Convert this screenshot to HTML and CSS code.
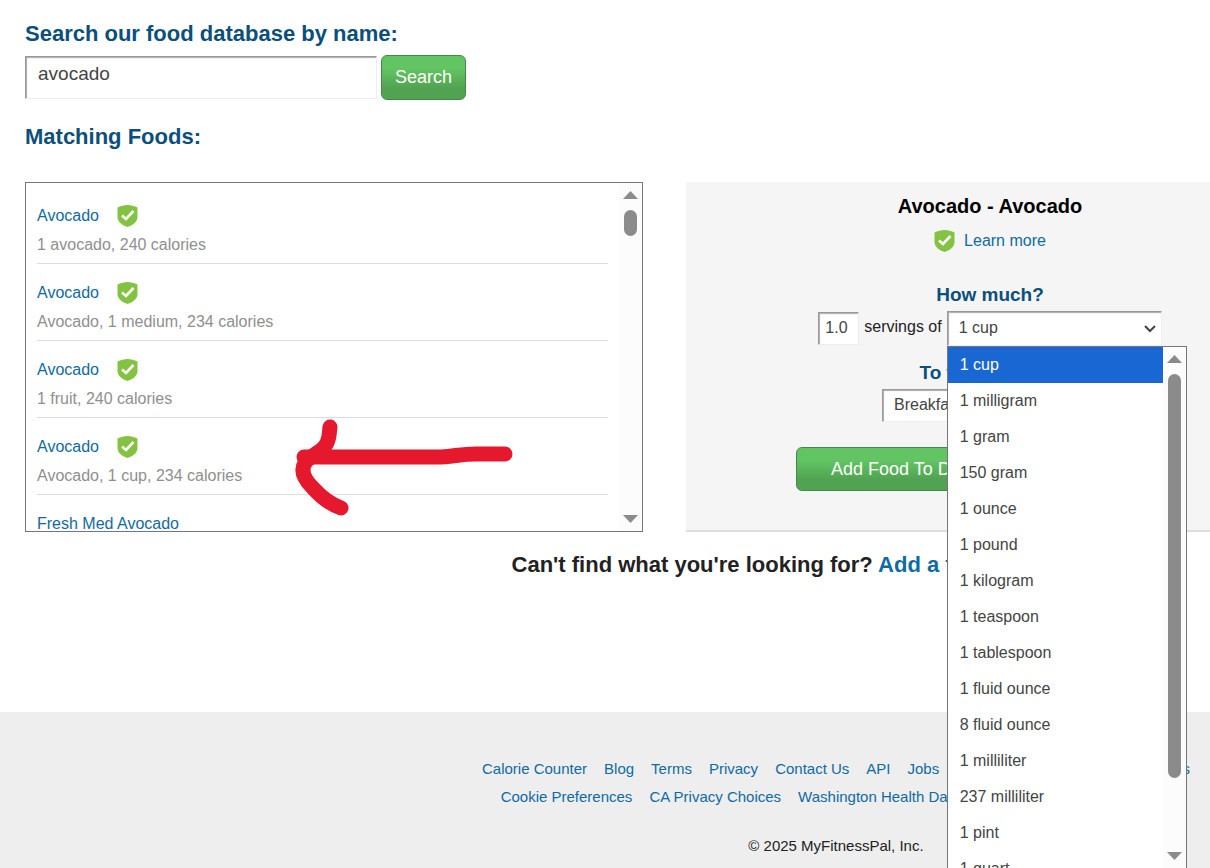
FILE: index.html
```html
<!DOCTYPE html>
<html lang="en">
<head>
    <meta charset="UTF-8">
    <meta name="viewport" content="width=device-width, initial-scale=1.0">
    <title>Add Food</title>
    <link rel="stylesheet" href="styles.css">
</head>
<body>
    <svg class="sprite" aria-hidden="true">
        <symbol id="verified" viewBox="0 0 20 22">
            <path fill="#84c341" d="M10 0C13 0 17 1 20 2.500V12C20 17 15 20.500 10 22C5 20.500 0 17 0 12V2.500C3 1 7 0 10 0Z"/>
            <path fill="none" stroke="#fff" stroke-width="2.600" d="M4.500 10.500L8.500 14L16 6"/>
        </symbol>
        <symbol id="chevron" viewBox="0 0 12 8">
            <path fill="none" stroke="#444" stroke-width="2" d="M1 1L6 6L11 1"/>
        </symbol>
        <symbol id="up" viewBox="0 0 15 8">
            <path fill="#8b8b8b" d="M7.500 0L15 8H0Z"/>
        </symbol>
        <symbol id="down" viewBox="0 0 15 8">
            <path fill="#8b8b8b" d="M0 0H15L7.500 8Z"/>
        </symbol>
    </svg>

    <main class="content">
        <form class="search">
            <label class="heading" for="search">Search our food database by name:</label>
            <div class="search-row">
                <input class="field search-input" type="text" id="search" name="search" value="avocado">
                <button class="button search-button" type="submit">Search</button>
            </div>
        </form>

        <h2 class="heading matching-title">Matching Foods:</h2>

        <div class="columns">
            <div class="matching">
                <ul class="foods">
                    <li class="food">
                        <div class="food-name"><a href="#">Avocado</a><svg class="badge"><use href="#verified"/></svg></div>
                        <div class="food-info">1 avocado, 240 calories</div>
                    </li>
                    <li class="food">
                        <div class="food-name"><a href="#">Avocado</a><svg class="badge"><use href="#verified"/></svg></div>
                        <div class="food-info">Avocado, 1 medium, 234 calories</div>
                    </li>
                    <li class="food">
                        <div class="food-name"><a href="#">Avocado</a><svg class="badge"><use href="#verified"/></svg></div>
                        <div class="food-info">1 fruit, 240 calories</div>
                    </li>
                    <li class="food">
                        <div class="food-name"><a href="#">Avocado</a><svg class="badge"><use href="#verified"/></svg></div>
                        <div class="food-info">Avocado, 1 cup, 234 calories</div>
                    </li>
                    <li class="food">
                        <div class="food-name"><a href="#">Fresh Med Avocado</a></div>
                    </li>
                </ul>
                <div class="scrollbar">
                    <svg class="scroll-arrow"><use href="#up"/></svg>
                    <div class="thumb thumb-short"></div>
                    <svg class="scroll-arrow scroll-down"><use href="#down"/></svg>
                </div>
                <!-- hand drawn arrow over the list -->
                <svg class="pointer" viewBox="0 0 220 98" aria-hidden="true">
                    <path d="M34 9C33 15 34 22 29 28C24 35 13 38 9 45C4 53 9 62 17 70C25 79 34 86 45 90"/>
                    <path d="M8 39H145C160 38 165 36 180 36H209"/>
                </svg>
            </div>

            <form class="details">
                <h3 class="food-title">Avocado - Avocado</h3>
                <p class="learn"><svg class="badge"><use href="#verified"/></svg><a href="#">Learn more</a></p>

                <h4 class="question">How much?</h4>
                <div class="amount">
                    <input class="field quantity" type="text" id="quantity" name="quantity" value="1.0" aria-label="Quantity">
                    <label for="unit">servings of</label>
                    <div class="unit">
                        <select class="field unit-select" id="unit" name="unit">
                            <option>1 cup</option>
                        </select>
                        <svg class="chevron"><use href="#chevron"/></svg>
                        <div class="popup">
                            <ul class="options" role="listbox" aria-label="Serving size">
                                <li class="option selected" role="option" aria-selected="true">1 cup</li>
                                <li class="option" role="option">1 milligram</li>
                                <li class="option" role="option">1 gram</li>
                                <li class="option" role="option">150 gram</li>
                                <li class="option" role="option">1 ounce</li>
                                <li class="option" role="option">1 pound</li>
                                <li class="option" role="option">1 kilogram</li>
                                <li class="option" role="option">1 teaspoon</li>
                                <li class="option" role="option">1 tablespoon</li>
                                <li class="option" role="option">1 fluid ounce</li>
                                <li class="option" role="option">8 fluid ounce</li>
                                <li class="option" role="option">1 milliliter</li>
                                <li class="option" role="option">237 milliliter</li>
                                <li class="option" role="option">1 pint</li>
                                <li class="option" role="option">1 quart</li>
                            </ul>
                            <div class="scrollbar">
                                <svg class="scroll-arrow"><use href="#up"/></svg>
                                <div class="thumb thumb-long"></div>
                                <svg class="scroll-arrow scroll-down"><use href="#down"/></svg>
                            </div>
                        </div>
                    </div>
                </div>

                <label class="question meal-label" for="meal">To which meal?</label>
                <select class="field meal" id="meal" name="meal">
                    <option>Breakfast</option>
                    <option>Lunch</option>
                    <option>Dinner</option>
                    <option>Snacks</option>
                </select>
                <div class="actions">
                    <button class="button add-button" type="submit">Add Food To Diary</button>
                </div>
            </form>
        </div>
    </main>

    <p class="missing">Can't find what you're looking for? <a href="#">Add a food to the database</a></p>

    <footer class="footer">
        <nav class="links">
            <a href="#">Calorie Counter</a>
            <a href="#">Blog</a>
            <a href="#">Terms</a>
            <a href="#">Privacy</a>
            <a href="#">Contact Us</a>
            <a href="#">API</a>
            <a href="#">Jobs</a>
            <a href="#">Feedback</a>
            <a href="#">Community Guidelines</a>
        </nav>
        <nav class="links">
            <a href="#">Cookie Preferences</a>
            <a href="#">CA Privacy Choices</a>
            <a href="#">Washington Health Data Privacy Policy</a>
            <a href="#">Nutrition Facts</a>
        </nav>
        <p class="copyright">© 2025 MyFitnessPal, Inc.</p>
    </footer>
</body>
</html>
```
FILE: styles.css
```css
* {
    box-sizing: border-box;
}
body {
    display: flex;
    flex-direction: column;
    min-height: 100vh;
    margin: 0;
    background-color: #fff;
    color: #222;
    font-family: "Liberation Sans", Arial, sans-serif;
    font-size: 16px;
    line-height: 20px;
    overflow: hidden;
}
a {
    color: #0f6ba3;
    text-decoration: none;
}
h2, h3, h4, p, ul {
    margin: 0;
    padding: 0;
}
ul {
    list-style: none;
}
.sprite {
    display: none;
}
.content {
    padding: 21px 0 0 25px;
}
.heading {
    display: block;
    color: #0b4f7c;
    font-size: 22px;
    font-weight: bold;
    line-height: 26px;
}
.field {
    margin: 0;
    border: 1px solid #eee;
    border-top-color: #999;
    border-left-color: #999;
    border-radius: 0;
    background-color: #fff;
    box-shadow: inset 1px 1px 1px #aaa;
    color: #444;
    font-family: inherit;
    font-size: 16px;
    appearance: none;
}
.button {
    border: 1px solid #45894a;
    border-radius: 6px;
    background: linear-gradient(#62c462 30%, #51a351 75%);
    color: #fff;
    font-family: inherit;
    font-size: 18px;
    cursor: pointer;
}
.search-row {
    display: flex;
    align-items: center;
    gap: 4px;
    margin-top: 8px;
}
.search-input {
    width: 352px;
    height: 43px;
    padding: 0 12px 8px;
    font-size: 19px;
}
.search-button {
    height: 45px;
    padding: 0 13px;
}
.matching-title {
    margin-top: 24px;
}
.columns {
    display: flex;
    gap: 43px;
    margin-top: 32px;
}
.matching {
    position: relative;
    display: flex;
    flex: 0 0 618px;
    height: 350px;
    border: 1px solid #767676;
}
.foods {
    flex: 1;
    padding: 4px 11px 0;
    overflow: hidden;
}
.food {
    padding: 15px 0 4px;
    border-bottom: 1px solid #ddd;
}
.food-name {
    display: flex;
    align-items: center;
    gap: 18px;
    height: 28px;
}
.food-info {
    color: #8f8f8f;
    line-height: 29px;
}
.badge {
    width: 21px;
    height: 22px;
}
.scrollbar {
    display: flex;
    flex: 0 0 23px;
    flex-direction: column;
    align-items: center;
    padding: 8px 0;
    background-color: #fcfcfc;
}
.scroll-arrow {
    width: 15px;
    height: 8px;
}
.scroll-down {
    margin-top: auto;
}
.thumb {
    width: 13px;
    margin-top: 11px;
    border-radius: 7px;
    background-color: #8b8b8b;
}
.thumb-short {
    height: 26px;
}
.thumb-long {
    height: 404px;
}
.pointer {
    position: absolute;
    top: 235px;
    left: 270px;
    width: 220px;
    height: 98px;
    overflow: visible;
    fill: none;
    stroke: #e5182d;
    stroke-width: 15;
    stroke-linecap: round;
    stroke-linejoin: round;
}
.details {
    display: flex;
    flex: 1;
    flex-direction: column;
    align-items: center;
    height: 350px;
    padding: 12px 0 0 84px;
    border-bottom: 2px solid #ddd;
    background-color: #f5f5f5;
}
.food-title {
    color: #000;
    font-size: 20px;
    line-height: 24px;
}
.learn {
    display: flex;
    align-items: center;
    gap: 9px;
    margin-top: 12px;
}
.question {
    margin-top: 31px;
    color: #0b4f7c;
    font-size: 19px;
    font-weight: bold;
    line-height: 24px;
}
.amount {
    display: flex;
    align-items: center;
    gap: 5px;
    margin-top: 4px;
}
.amount label {
    padding-bottom: 4px;
}
.quantity {
    width: 41px;
    height: 33px;
    padding: 0 6px 2px;
}
.unit {
    position: relative;
}
.unit-select {
    display: block;
    width: 215px;
    height: 35px;
    padding: 0 11px 2px;
}
.chevron {
    position: absolute;
    top: 14px;
    right: 6px;
    width: 12px;
    height: 8px;
}
.popup {
    position: absolute;
    z-index: 1;
    top: 35px;
    left: 0;
    display: flex;
    width: 240px;
    height: 522px;
    border: 1px solid #767676;
    border-bottom: 0;
    background-color: #fff;
    overflow: hidden;
}
.options {
    flex: 1;
}
.option {
    padding: 0 12px;
    color: #444;
    line-height: 36px;
}
.option.selected {
    background-color: #1967d2;
    color: #fff;
}
.meal-label {
    margin-top: 15px;
}
.meal {
    width: 216px;
    height: 33px;
    margin-top: 4px;
    padding: 0 11px 2px;
}
.actions {
    width: 388px;
    margin-top: 25px;
}
.add-button {
    height: 44px;
    padding: 0 34px;
}
.missing {
    margin-top: 20px;
    padding-left: 462px;
    font-size: 22px;
    font-weight: bold;
    line-height: 26px;
    text-align: center;
}
.footer {
    flex: 1;
    margin-top: 134px;
    padding: 43px 0 0 462px;
    background-color: #eee;
    font-size: 15px;
    line-height: 28px;
}
.links {
    display: flex;
    justify-content: center;
    gap: 17px;
    white-space: nowrap;
}
.copyright {
    margin-top: 21px;
    text-align: center;
}
```
